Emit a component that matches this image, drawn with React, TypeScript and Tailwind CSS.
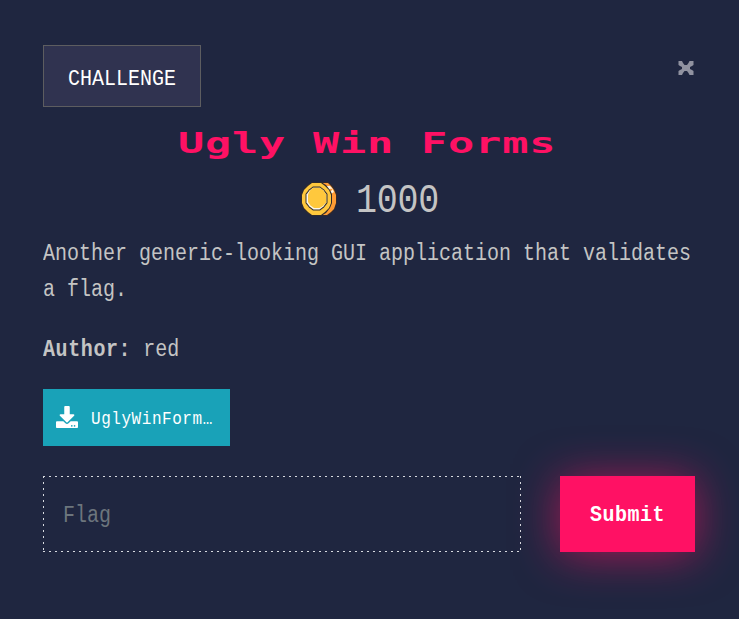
import { FaDownload } from "react-icons/fa";

function Coin() {
  return (
    <svg width="37" height="34" viewBox="0 0 37 34">
      <path d="M21 0H27L31 3L34 7L36 12V21L34 27L31 31L27 34H21Z" fill="#33292c" />
      <path d="M22 1H27L30 4L33 8L35 13V21L33 27L30 30L26 33H22Z" fill="#ff9c34" />
      <path d="M25 4H29L31 6L33 10L30 12L28 9L26 7Z" fill="#fff3dc" />
      <path d="M28 8L30 6.5L31.5 7.5L29 10Z" fill="#ff9c34" />
      <path d="M11 0H20L25 3L29 8L31 12V21L29 26L25 31L20 34H11L6 31L2 26L0 21V12L2 8L6 3Z" fill="#302b2c" />
      <path d="M11 1H20L24 4L28 8L30 13V21L28 26L24 30L20 33H11L7 30L3 26L1 21V13L3 8L7 4Z" fill="#ffc83d" />
      <path d="M12 4.5H19L23 7.5L26.5 12V21L23 25.5L19 28.5H12L8 25.5L4.5 21V12L8 7.5Z" fill="#35302e" />
      <path d="M12 5.7H19L22.5 8.5L25.3 12.5V20.5L22.5 24.5L18.5 27.5H12.5L8.5 24.5L5.5 20.5V12.5L8.5 8.5Z" fill="#fff8e8" />
      <path d="M12 5.7H19L22.5 8.5L25.3 12.5V20.5L22 24L18.5 26H13L9.5 23.5L7 20V12.5L9 8.5Z" fill="#ffc83d" />
    </svg>
  );
}

function CloseIcon() {
  return (
    <svg width="16" height="14" viewBox="0 0 16 14" fill="#9092a0">
      <path d="M0.5 0H4L5 2L6.5 4H9L10.5 2L11.5 0H15.5V4L14 5L12 6V8L14 9L15.5 10V14H11.5L10.5 12L9 10H6.5L5 12L4 14H0.5V10L2 9L4 8V6L2 5L0.5 4Z" />
    </svg>
  );
}

const mono = "font-['Liberation_Mono',monospace]";

export default function App() {
  return (
    <main className={`h-[619px] w-[739px] overflow-hidden bg-[#1f2640] pt-[45px] pr-[44px] pl-[43px] text-[20px] text-[#c4c4c4] ${mono}`}>
      <header className="flex h-[62px] items-start justify-between">
        <div className="flex h-[62px] w-[158px] items-center justify-center border border-[#5d5d60] bg-[#303350] text-white">
          <span className="origin-center translate-y-[3px] scale-y-[1.14]">CHALLENGE</span>
        </div>
        <button aria-label="Close" className="mt-4 mr-px"><CloseIcon /></button>
      </header>
      <h1 className="flex h-[70px] items-center justify-center text-[#ff1164]">
        <span className="block -translate-x-0.5 translate-y-px scale-x-150 whitespace-pre font-['DejaVu_Sans_Mono',monospace] text-[29px] leading-[40px] font-bold tracking-[0.55px]">Ugly Win Forms</span>
      </h1>
      <div className="mt-px flex h-[42px] items-center justify-center gap-[18px] pl-0.5">
        <Coin />
        <span className="block translate-y-[3px] scale-y-[1.15] text-[35px] leading-[40px] tracking-[-0.3px]">1000</span>
      </div>
      <div className="mt-[16px] leading-9 whitespace-nowrap">
        <p className="scale-y-[1.15]">Another generic-looking GUI application that validates</p>
        <p className="scale-y-[1.15]">a flag.</p>
        <p className="mt-6 scale-y-[1.15]"><strong className="tracking-[0.6px]">Author:</strong> red</p>
      </div>
      <button className="mt-[21px] flex h-[57px] w-[187px] items-center bg-[#19a2b8] pl-[13px] text-white">
        <FaDownload className="size-[22px] -translate-y-px" />
        <span className="ml-[13px] block translate-y-[2px] scale-y-110 text-[16px] leading-6 tracking-[0.55px]">UglyWinForm…</span>
      </button>
      <div className="mt-[30px] flex justify-between">
        <div className="flex h-[76px] w-[478px] items-center bg-[repeating-linear-gradient(90deg,#d7dae0_0_2px,transparent_2px_6px),repeating-linear-gradient(90deg,#d7dae0_0_2px,transparent_2px_6px),repeating-linear-gradient(180deg,#d7dae0_0_2px,transparent_2px_6px),repeating-linear-gradient(180deg,#d7dae0_0_2px,transparent_2px_6px)] bg-[length:100%_1px,100%_1px,1px_100%,1px_100%] bg-[position:left_top,left_bottom,left_top,right_top] bg-no-repeat pl-5 text-[#6c757d]">
          <span className="translate-y-[2px] scale-y-[1.15]">Flag</span>
        </div>
        <button className="flex h-[76px] w-[135px] items-center justify-center bg-[#ff1164] font-bold tracking-[0.5px] text-white shadow-[0_3px_45px_rgba(255,17,100,0.6)]">
          <span className="translate-y-[2px] scale-y-[1.06]">Submit</span>
        </button>
      </div>
    </main>
  );
}
